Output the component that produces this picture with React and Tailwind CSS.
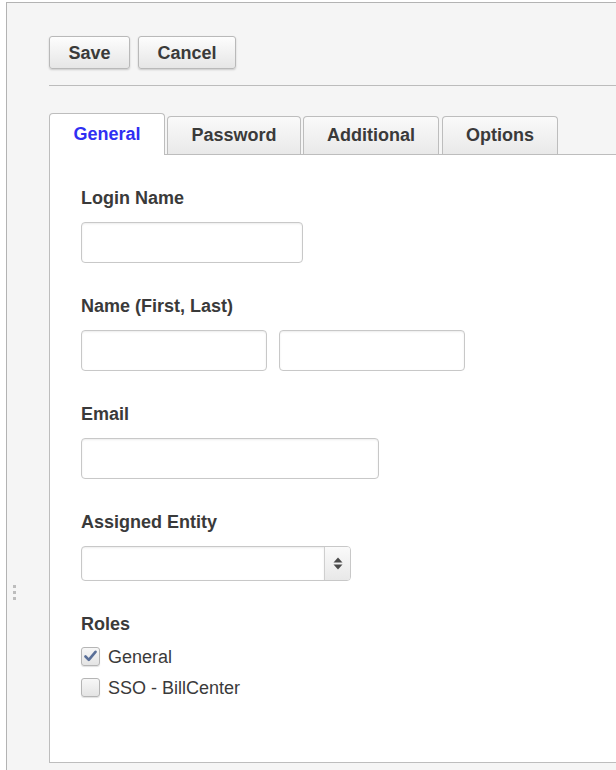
import React from "react";

function Btn({ children, w }) {
  return (
    <button
      className={`h-[33px] ${w} rounded-[3px] border border-[#b9b9b9] bg-linear-to-b from-[#fdfdfd] to-[#e6e6e6] shadow-[0_1px_2px_rgba(0,0,0,0.18)] text-[18px] leading-[20px] font-bold text-[#3a3a3a]`}
    >
      {children}
    </button>
  );
}

function Tab({ children, active, w, ml }) {
  if (active) {
    return (
      <div
        className={`relative z-10 -mb-px h-[42px] ${w} ${ml} flex items-center justify-center rounded-t-[4px] border border-b-0 border-[#bdbdbd] bg-white text-[18px] font-bold text-[#2f2ff2]`}
      >
        {children}
      </div>
    );
  }
  return (
    <div
      className={`h-[38px] ${w} ${ml} flex items-center justify-center rounded-t-[4px] border border-b-0 border-[#bdbdbd] bg-linear-to-b from-[#fafafa] to-[#e9e9e9] text-[18px] font-bold text-[#3a3a3a]`}
    >
      {children}
    </div>
  );
}

function Label({ children }) {
  return (
    <div className="pt-[1px] text-[18px] leading-[20px] font-bold text-[#3a3a3a]">{children}</div>
  );
}

function Input({ w }) {
  return (
    <div
      className={`h-[41px] ${w} rounded-[4px] border border-[#c8c8c8] bg-white shadow-[inset_0_1px_2px_rgba(0,0,0,0.08)]`}
    />
  );
}

function Checkbox({ checked, label }) {
  return (
    <div className="flex items-center h-[20px]">
      <div className="w-[19px] h-[19px] rounded-[3px] border border-[#b5b5b5] bg-linear-to-b from-[#f7f7f7] to-[#e4e4e4] shadow-[0_1px_1px_rgba(0,0,0,0.12)] flex items-center justify-center">
        {checked && (
          <svg width="13" height="12" viewBox="0 0 13 12">
            <path d="M1.5 6.5 L4.8 9.8 L11.5 1.8" fill="none" stroke="#5a6f98" strokeWidth="2.6" strokeLinecap="round" strokeLinejoin="round" />
          </svg>
        )}
      </div>
      <span className="ml-[8px] pt-[1px] text-[18px] leading-[20px] text-[#3a3a3a]">{label}</span>
    </div>
  );
}

export default function App() {
  return (
    <div className="w-[616px] h-[770px] overflow-hidden bg-white flex font-['Liberation_Sans',Arial,sans-serif]">
      <div className="w-[6px] shrink-0 bg-white" />
      <div className="relative flex-1 mt-[2px] border-l border-t border-[#b3b3b3] bg-[#f5f5f5] pl-[42px] pt-[33px]">
        {/* grip */}
        <div className="absolute left-[6px] top-[582px] flex flex-col gap-[3px]">
          <div className="w-[3px] h-[3px] bg-[#bdbdbd]" />
          <div className="w-[3px] h-[3px] bg-[#bdbdbd]" />
          <div className="w-[3px] h-[3px] bg-[#bdbdbd]" />
        </div>

        <div className="flex gap-[8px] pb-[16px] border-b border-[#bcbcbc]">
          <Btn w="w-[81px]">Save</Btn>
          <Btn w="w-[98px]">Cancel</Btn>
        </div>

        <div className="mt-[27px] flex items-end">
          <Tab active w="w-[116px]" ml="ml-0">General</Tab>
          <Tab w="w-[134px]" ml="ml-[2px]">Password</Tab>
          <Tab w="w-[136px]" ml="ml-[2px]">Additional</Tab>
          <Tab w="w-[116px]" ml="ml-[3px]">Options</Tab>
        </div>

        <div className="h-[609px] border-l border-t border-b border-[#bdbdbd] bg-white pl-[31px] pt-[32px]">
          <Label>Login Name</Label>
          <div className="mt-[14px]">
            <Input w="w-[222px]" />
          </div>

          <div className="mt-[32px]">
            <Label>Name (First, Last)</Label>
          </div>
          <div className="mt-[14px] flex gap-[12px]">
            <Input w="w-[186px]" />
            <Input w="w-[186px]" />
          </div>

          <div className="mt-[32px]">
            <Label>Email</Label>
          </div>
          <div className="mt-[14px]">
            <Input w="w-[298px]" />
          </div>

          <div className="mt-[32px]">
            <Label>Assigned Entity</Label>
          </div>
          <div className="mt-[14px] flex h-[35px] w-[270px] rounded-[4px] border border-[#c8c8c8] bg-white overflow-hidden">
            <div className="flex-1 shadow-[inset_0_1px_2px_rgba(0,0,0,0.08)]" />
            <div className="w-[26px] border-l border-[#cfcfcf] bg-linear-to-b from-[#fafafa] to-[#e8e8e8] flex flex-col items-center justify-center gap-[2px]">
              <svg width="10" height="13" viewBox="0 0 10 13">
                <path d="M5 0.5 L9.5 5.5 L0.5 5.5 Z" fill="#4a4a4a" />
                <path d="M0.5 7.5 L9.5 7.5 L5 12.5 Z" fill="#4a4a4a" />
              </svg>
            </div>
          </div>

          <div className="mt-[32px]">
            <Label>Roles</Label>
          </div>
          <div className="mt-[12px] flex flex-col gap-[11px]">
            <Checkbox checked label="General" />
            <Checkbox label="SSO - BillCenter" />
          </div>
        </div>
      </div>
    </div>
  );
}
